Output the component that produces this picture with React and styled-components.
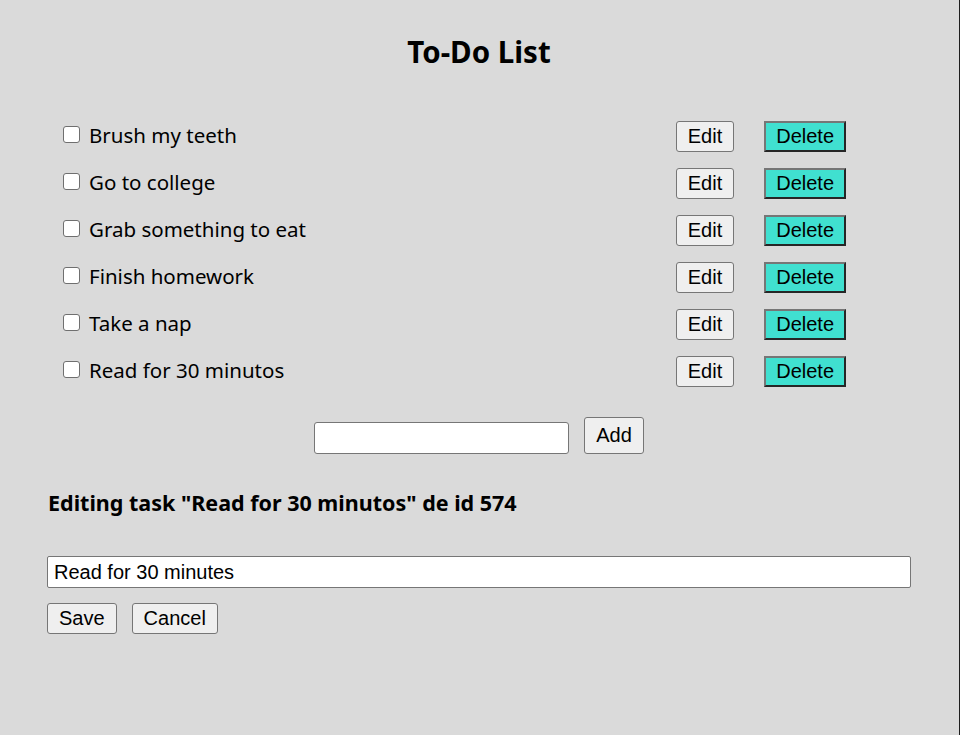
import styled, { createGlobalStyle } from "styled-components";

const tasks = [
    { id: 101, text: "Brush my teeth" },
    { id: 214, text: "Go to college" },
    { id: 339, text: "Grab something to eat" },
    { id: 412, text: "Finish homework" },
    { id: 518, text: "Take a nap" },
    { id: 574, text: "Read for 30 minutos" }
]

export default function App() {
    const editando = tasks[5];

    return (
        <>
            <GlobalStyle />
            <Pagina>
                <Titulo>To-Do List</Titulo>

                <Lista>
                    {tasks.map((task) => (
                        <Linha key={task.id}>
                            <Caixa type="checkbox" />
                            <Texto>{task.text}</Texto>
                            <Botao>Edit</Botao>
                            <Apagar>Delete</Apagar>
                        </Linha>
                    ))}
                </Lista>

                <Adicionar>
                    <CampoNovo type="text" />
                    <Botao $grande>Add</Botao>
                </Adicionar>

                <Edicao>
                    <Subtitulo>Editing task "{editando.text}" de id {editando.id}</Subtitulo>
                    <CampoEdicao type="text" defaultValue="Read for 30 minutes" />
                    <Acoes>
                        <Botao>Save</Botao>
                        <Botao>Cancel</Botao>
                    </Acoes>
                </Edicao>
            </Pagina>
        </>
    )
}

const GlobalStyle = createGlobalStyle`
    body {
        margin: 0;
        background: #dadada;
        font-family: "Noto Sans", "Open Sans", sans-serif;
        color: #000;
    }
`

const Pagina = styled.div`
    box-sizing: border-box;
    width: 960px;
    min-height: 735px;
    border-right: 1px solid #1e1e1e;
    padding: 33px 48px 0 47px;
`

const Titulo = styled.h1`
    margin: 0;
    text-align: center;
    font-size: 29.5px;
    line-height: 38px;
    font-weight: 700;
`

const Lista = styled.div`
    margin-top: 50px;
    display: flex;
    flex-direction: column;
    gap: 16px;
`

const Linha = styled.div`
    display: flex;
    align-items: center;
    height: 31px;
    padding: 0 65px 0 16px;
`

const Caixa = styled.input`
    -webkit-appearance: none;
    appearance: none;
    box-sizing: border-box;
    flex: 0 0 17px;
    width: 17px;
    height: 17px;
    margin: 0 9px 4px 0;
    background: #fff;
    border: 1.5px solid #6f6f6f;
    border-radius: 3px;
`

const Texto = styled.span`
    flex: 1;
    font-size: 20.5px;
    line-height: 26px;
    padding-bottom: 4px;
`

const Botao = styled.button`
    box-sizing: border-box;
    height: ${({ $grande }) => ($grande ? "37px" : "31px")};
    padding: 0 11px;
    font-family: "Liberation Sans", Arial, sans-serif;
    font-size: 20px;
    color: #000;
    background: #efefef;
    border: 1px solid #767676;
    border-radius: 3px;
`

const Apagar = styled.button`
    box-sizing: border-box;
    height: 31px;
    margin-left: 30px;
    padding: 0 10px;
    font-family: "Liberation Sans", Arial, sans-serif;
    font-size: 20px;
    color: #000;
    background: #40e0d0;
    border: 2px solid;
    border-color: #767676 #262626 #262626 #767676;
    border-radius: 0;
`

const Adicionar = styled.div`
    margin-top: 30px;
    display: flex;
    justify-content: center;
    align-items: flex-end;
    gap: 15px;
`

const CampoNovo = styled.input`
    box-sizing: border-box;
    width: 255px;
    height: 32px;
    background: #fff;
    border: 1px solid #767676;
    border-radius: 3px;
    font-family: "Liberation Sans", Arial, sans-serif;
    font-size: 20px;
`

const Edicao = styled.div`
    margin-top: 35px;
`

const Subtitulo = styled.h3`
    margin: 0 0 40px 1px;
    font-size: 21.5px;
    line-height: 27px;
    font-weight: 700;
`

const CampoEdicao = styled.input`
    display: block;
    box-sizing: border-box;
    width: 864px;
    height: 32px;
    padding: 0 6px;
    background: #fff;
    border: 1px solid #767676;
    border-radius: 2px;
    font-family: "Liberation Sans", Arial, sans-serif;
    font-size: 20px;
    color: #000;
`

const Acoes = styled.div`
    margin-top: 15px;
    display: flex;
    gap: 15px;
`
